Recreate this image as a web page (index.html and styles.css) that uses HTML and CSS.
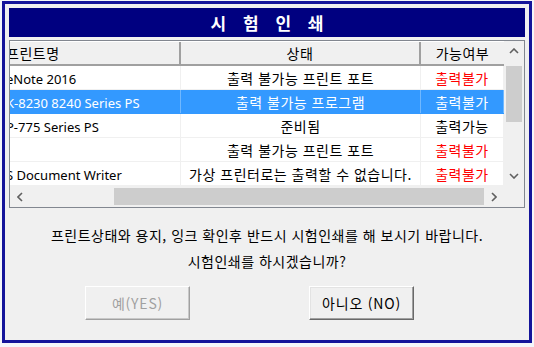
FILE: index.html
```html
<!DOCTYPE html>
<html lang="ko">
  <head>
    <meta charset="UTF-8" />
    <title>시험인쇄</title>
    <link rel="stylesheet" href="styles.css">
  </head>
  <body>
    <div class="dialog">
      <div class="title">시 험 인 쇄</div>

      <div class="list">
        <div class="list-main">
          <div class="table">
            <div class="row head">
              <div class="cell name"><span>프린트명</span></div>
              <div class="cell state">상태</div>
              <div class="cell able">가능여부</div>
            </div>
            <div class="row">
              <div class="cell name"><span>eNote 2016</span></div>
              <div class="cell state">출력 불가능 프린트 포트</div>
              <div class="cell able no">출력불가</div>
            </div>
            <div class="row selected">
              <div class="cell name"><span>K-8230 8240 Series PS</span></div>
              <div class="cell state">출력 불가능 프로그램</div>
              <div class="cell able">출력불가</div>
            </div>
            <div class="row">
              <div class="cell name"><span>P-775 Series PS</span></div>
              <div class="cell state">준비됨</div>
              <div class="cell able">출력가능</div>
            </div>
            <div class="row">
              <div class="cell name"><span></span></div>
              <div class="cell state">출력 불가능 프린트 포트</div>
              <div class="cell able no">출력불가</div>
            </div>
            <div class="row">
              <div class="cell name"><span>S Document Writer</span></div>
              <div class="cell state">가상 프린터로는 출력할 수 없습니다.</div>
              <div class="cell able no">출력불가</div>
            </div>
          </div>

          <div class="vscroll">
            <div class="arrow">
              <svg width="10" height="6" viewBox="0 0 10 6"><polyline points="1,5 5,1 9,5" fill="none" stroke="#606060" stroke-width="1.6"/></svg>
            </div>
            <div class="vthumb"></div>
            <div class="spacer"></div>
            <div class="arrow">
              <svg width="10" height="6" viewBox="0 0 10 6"><polyline points="1,1 5,5 9,1" fill="none" stroke="#606060" stroke-width="1.6"/></svg>
            </div>
          </div>
        </div>

        <div class="hscroll-row">
          <div class="hscroll">
            <div class="arrow">
              <svg width="6" height="10" viewBox="0 0 6 10"><polyline points="5,1 1,5 5,9" fill="none" stroke="#606060" stroke-width="1.6"/></svg>
            </div>
            <div class="htrack"></div>
            <div class="hthumb"></div>
            <div class="arrow">
              <svg width="6" height="10" viewBox="0 0 6 10"><polyline points="1,1 5,5 1,9" fill="none" stroke="#606060" stroke-width="1.6"/></svg>
            </div>
          </div>
          <div class="corner"></div>
        </div>
      </div>

      <div class="message">
        <p>프린트상태와 용지, 잉크 확인후 반드시 시험인쇄를 해 보시기 바랍니다.</p>
        <p>시험인쇄를 하시겠습니까?</p>
      </div>

      <div class="buttons">
        <button type="button" disabled>예(YES)</button>
        <button type="button">아니오 (NO)</button>
      </div>
    </div>
  </body>
</html>
```

FILE: styles.css
```css
body {
  margin: 0;
  background: #f4f6fa;
  font-family: "Noto Sans", "Noto Sans CJK KR", sans-serif;
  font-size: 13px;
  color: #000;
}

.dialog {
  box-sizing: border-box;
  width: 530px;
  height: 342px;
  margin: 1px 0 0 2px;
  padding: 4px 4px 0 4px;
  border: 3px solid #14149a;
  background: #f0f0f0;
}

.title {
  height: 29px;
  background: #000080;
  color: #fff;
  font-family: "Noto Sans CJK KR", sans-serif;
  font-weight: bold;
  font-size: 17px;
  line-height: 29px;
  text-align: center;
  letter-spacing: 6px;
  padding-left: 6px;
}

.list {
  margin-top: 3px;
  border: 1px solid #828790;
  background: #fff;
}

.list-main {
  display: flex;
}

.table {
  width: 494px;
}

.row {
  display: flex;
  height: 24px;
  line-height: 24px;
  border-bottom: 1px solid #f0f0f0;
  box-sizing: border-box;
  font-family: "Noto Sans CJK KR", sans-serif;
  font-size: 14px;
  letter-spacing: 0.5px;
}

.row .cell {
  box-sizing: border-box;
  white-space: nowrap;
  overflow: hidden;
  border-right: 1px solid #f0f0f0;
}

.row.head {
  height: 25px;
  background: #f0f0f0;
  border-top: 1px solid #fff;
  border-bottom: 2px solid #a0a0a0;
  line-height: 22px;
}

.row.head .cell {
  border-right: 2px solid #a0a0a0;
}

.row.head .cell.able {
  border-right: none;
}

.name {
  width: 171px;
}

.name span {
  display: inline-block;
  margin-left: -4px;
  font-family: "Noto Sans", "Noto Sans CJK KR", sans-serif;
  font-size: 13px;
  letter-spacing: 0;
}

.head .name span {
  font-family: "Noto Sans CJK KR", sans-serif;
  font-size: 14px;
  letter-spacing: 0.5px;
}

.state {
  width: 240px;
  text-align: center;
}

.able {
  width: 83px;
  text-align: center;
}

.able.no {
  color: #ff0000;
}

.row.selected {
  background: #3399ff;
  color: #fff;
  border-bottom-color: #3399ff;
}

.row.selected .cell {
  border-right-color: #70b8ff;
}

.vscroll {
  width: 20px;
  display: flex;
  flex-direction: column;
  background: #f0f0f0;
}

.arrow {
  width: 20px;
  height: 20px;
  display: flex;
  align-items: center;
  justify-content: center;
  flex-shrink: 0;
}

.vthumb {
  margin: 5px 2px 0;
  height: 56px;
  background: #cdcdcd;
}

.spacer {
  flex: 1;
}

.hscroll-row {
  display: flex;
  height: 21px;
}

.hscroll {
  width: 494px;
  display: flex;
  align-items: center;
  background: #f0f0f0;
}

.hscroll .arrow {
  height: 21px;
}

.htrack {
  width: 84px;
}

.hthumb {
  width: 370px;
  height: 17px;
  background: #cdcdcd;
}

.corner {
  width: 20px;
  background: #f0f0f0;
}

.message {
  margin-top: 14px;
  text-align: center;
  font-family: "Noto Sans CJK KR", sans-serif;
  font-size: 14px;
  letter-spacing: 0.5px;
  line-height: 26px;
}

.message p {
  margin: 0;
}

.buttons {
  display: flex;
  gap: 119px;
  margin-top: 12px;
  padding-left: 76px;
}

button {
  width: 105px;
  height: 34px;
  background: #f0f0f0;
  border: 1px solid;
  border-color: #ffffff #696969 #696969 #ffffff;
  box-shadow: inset -1px -1px 0 #a0a0a0, inset 1px 1px 0 #e3e3e3;
  font-family: "Noto Sans CJK KR", sans-serif;
  font-size: 14px;
  letter-spacing: 0.8px;
  color: #000;
}

button:disabled {
  color: #a0a0a0;
  border-color: #ffffff #a0a0a0 #a0a0a0 #ffffff;
  box-shadow: inset -1px -1px 0 #c8c8c8;
}
```
